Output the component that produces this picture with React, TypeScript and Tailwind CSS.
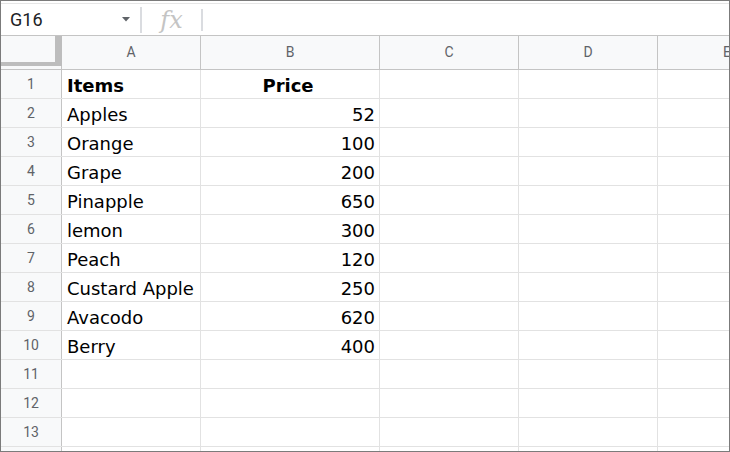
import React from "react";

const rows: { item: string; price: string; bold?: boolean }[] = [
  { item: "Items", price: "Price", bold: true },
  { item: "Apples", price: "52" },
  { item: "Orange", price: "100" },
  { item: "Grape", price: "200" },
  { item: "Pinapple", price: "650" },
  { item: "lemon", price: "300" },
  { item: "Peach", price: "120" },
  { item: "Custard Apple", price: "250" },
  { item: "Avacodo", price: "620" },
  { item: "Berry", price: "400" },
  { item: "", price: "" },
  { item: "", price: "" },
  { item: "", price: "" },
  { item: "", price: "" },
];

const cols = [
  { label: "A", w: "w-[139px]" },
  { label: "B", w: "w-[179px]" },
  { label: "C", w: "w-[139px]" },
  { label: "D", w: "w-[139px]" },
  { label: "E", w: "w-[139px]" },
];

export default function App() {
  return (
    <div className="w-[730px] h-[452px] overflow-hidden border border-[#7b7b7b] bg-white flex flex-col font-['Roboto',sans-serif]">
      {/* formula bar */}
      <div className="h-[35px] shrink-0 border-b border-[#c4c4c4] flex flex-col">
        <div className="h-[2px]" />
        <div className="h-px bg-[#e6e6e6]" />
        <div className="flex-1 flex items-center">
          <div className="w-[139px] h-full flex items-center pl-[9px] pr-[10px]">
            <span className="text-[18px] text-[#202124] leading-none">G16</span>
            <svg className="ml-auto" width="8" height="5" viewBox="0 0 8 5">
              <path d="M0 0h8L4 4.5z" fill="#5f6368" />
            </svg>
          </div>
          <div className="w-[2px] h-[26px] bg-[#dadce0]" />
          <div className="w-[59px] flex items-center justify-center">
            <span className="font-['DejaVu_Serif',serif] italic text-[24px] text-[#c4c4c4] leading-none">
              fx
            </span>
          </div>
          <div className="w-[2px] h-[22px] bg-[#dadce0]" />
        </div>
      </div>

      {/* column header */}
      <div className="h-[34px] shrink-0 flex border-b border-[#c4c4c4] bg-[#f8f9fa]">
        <div className="relative w-[61px] shrink-0 border-r border-[#c4c4c4]">
          <div className="absolute right-[-1px] top-0 w-[7px] h-[30px] bg-[#bdbdbd]" />
          <div className="absolute left-0 top-[26px] w-[54px] h-[4px] bg-[#bdbdbd]" />
        </div>
        {cols.map((c) => (
          <div
            key={c.label}
            className={`${c.w} shrink-0 border-r border-[#c4c4c4] flex items-center justify-center text-[14px] text-[#5f6368]`}
          >
            {c.label}
          </div>
        ))}
      </div>

      {/* rows */}
      {rows.map((r, i) => (
        <div key={i} className="h-[29px] shrink-0 flex border-b border-[#e2e2e2]">
          <div className="w-[61px] shrink-0 border-r border-[#c4c4c4] bg-[#f8f9fa] flex items-center justify-center text-[14px] text-[#5f6368]">
            {i < 13 ? i + 1 : ""}
          </div>
          <div
            className={`w-[139px] shrink-0 border-r border-[#e2e2e2] flex items-center pl-[5px] pt-[2px] text-[18px] text-black font-['DejaVu_Sans',sans-serif] whitespace-nowrap overflow-hidden ${
              r.bold ? "font-bold" : ""
            }`}
          >
            {r.item}
          </div>
          <div
            className={`w-[179px] shrink-0 border-r border-[#e2e2e2] flex items-center pr-[4px] pt-[2px] text-[18px] text-black font-['DejaVu_Sans',sans-serif] ${
              r.bold ? "font-bold justify-center" : "justify-end"
            }`}
          >
            {r.price}
          </div>
          <div className="w-[139px] shrink-0 border-r border-[#e2e2e2]" />
          <div className="w-[139px] shrink-0 border-r border-[#e2e2e2]" />
          <div className="w-[139px] shrink-0" />
        </div>
      ))}
    </div>
  );
}
